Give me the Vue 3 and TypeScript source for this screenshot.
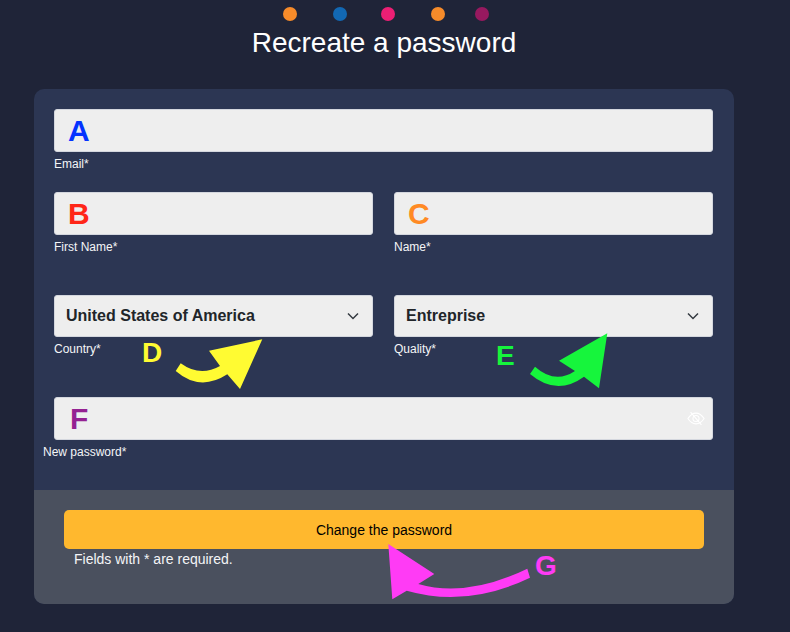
<script setup lang="ts">
const dots: { color: string; gap: number }[] = [
  { color: '#f68b2a', gap: 0 },
  { color: '#1268b3', gap: 36 },
  { color: '#ec1f74', gap: 34 },
  { color: '#f68b2a', gap: 36 },
  { color: '#97195f', gap: 30 },
]
</script>

<template>
  <div class="page">
    <div class="dots">
      <span
        v-for="(d, i) in dots"
        :key="i"
        class="dot"
        :style="{ background: d.color, marginLeft: d.gap + 'px' }"
      ></span>
    </div>
    <h1 class="title">Recreate a password</h1>

    <form class="card" @submit.prevent>
      <div class="body">
        <div class="field row-a">
          <div class="input"><span class="mark mark-a">A</span></div>
          <label class="label">Email*</label>
        </div>

        <div class="cols row-b">
          <div class="field">
            <div class="input"><span class="mark mark-b">B</span></div>
            <label class="label">First Name*</label>
          </div>
          <div class="field">
            <div class="input"><span class="mark mark-c">C</span></div>
            <label class="label">Name*</label>
          </div>
        </div>

        <div class="cols row-c">
          <div class="field">
            <div class="input select">
              <span>United States of America</span>
              <svg class="chevron" viewBox="0 0 12 8" width="12" height="8">
                <path d="M1 1.5 L6 6.5 L11 1.5" />
              </svg>
            </div>
            <label class="label">Country*</label>
          </div>
          <div class="field">
            <div class="input select">
              <span>Entreprise</span>
              <svg class="chevron" viewBox="0 0 12 8" width="12" height="8">
                <path d="M1 1.5 L6 6.5 L11 1.5" />
              </svg>
            </div>
            <label class="label">Quality*</label>
          </div>
        </div>

        <div class="field">
          <div class="input password">
            <span class="mark mark-f">F</span>
            <svg class="eye" viewBox="0 0 20 16" width="18" height="15">
              <path d="M1 8 C4 3.5 7 2 10 2 C13 2 16 3.5 19 8 C16 12.5 13 14 10 14 C7 14 4 12.5 1 8 Z" />
              <circle cx="10" cy="8" r="3.4" />
              <path d="M4 1 L16 15" />
            </svg>
          </div>
          <label class="label label-out">New password*</label>
        </div>
      </div>

      <div class="foot">
        <button class="submit" type="submit">Change the password</button>
        <p class="note">Fields with * are required.</p>
      </div>
    </form>

    <span class="note-letter letter-d">D</span>
    <span class="note-letter letter-e">E</span>
    <span class="note-letter letter-g">G</span>

    <svg class="arrows" viewBox="0 0 790 632" width="790" height="632">
      <path fill="#fffb32" d="M180.7 363.3 Q200 377.4 220 366 L209 350.7 L262.3 339.3 L240 389 L227.3 374.3 Q200 392 175.7 371 Z" />
      <path fill="#16f53c" d="M535 366.7 Q555 384.5 575 371 L559 360.7 L607.3 333.3 L599 388.3 L584 376.7 Q556.7 396.6 530 374 Z" />
      <path fill="#ff3bf5" d="M527.3 568.7 Q467 598 418.3 584 L434.3 574 L388.3 544 L392.3 599.3 L406.7 590.7 Q467 608 530 577.7 Z" />
    </svg>
  </div>
</template>

<style>
html,
body {
  margin: 0;
  background: #1f2438;
}
</style>

<style scoped>
.page {
  position: relative;
  box-sizing: border-box;
  width: 790px;
  height: 632px;
  overflow: hidden;
  padding: 7px 56px 0 34px;
  background: #1f2438;
  font-family: "Liberation Sans", Arial, sans-serif;
  color: #fff;
}
.dots {
  display: flex;
  height: 14px;
  padding-left: 249px;
}
.dot {
  flex: none;
  width: 14px;
  height: 14px;
  border-radius: 50%;
}
.title {
  margin: 5px 0 0;
  font-size: 28px;
  line-height: 34px;
  font-weight: 400;
  text-align: center;
}
.card {
  margin-top: 29px;
  width: 700px;
  height: 515px;
  display: flex;
  flex-direction: column;
  border-radius: 10px;
  overflow: hidden;
  background: #2c3653;
}
.body {
  box-sizing: border-box;
  height: 401px;
  padding: 20px 21px 0 20px;
}
.row-a {
  margin-bottom: 20px;
}
.row-b {
  margin-bottom: 40px;
}
.row-c {
  margin-bottom: 40px;
}
.cols {
  display: grid;
  grid-template-columns: 319px 319px;
  column-gap: 21px;
}
.row-c .input {
  height: 42px;
}
.input {
  box-sizing: border-box;
  height: 43px;
  display: flex;
  align-items: center;
  padding-left: 13px;
  background: #eeeeee;
  border: 1px solid #d4d7de;
  border-radius: 3px;
}
.select {
  justify-content: space-between;
  padding: 0 13px 0 11px;
  font-size: 16px;
  font-weight: 700;
  color: #212529;
}
.chevron {
  fill: none;
  stroke: #343a40;
  stroke-width: 1.5;
}
.password {
  justify-content: space-between;
  padding-right: 7px;
}
.eye {
  fill: none;
  stroke: #ffffff;
  stroke-width: 1.2;
}
.label {
  display: block;
  height: 20px;
  padding-top: 5px;
  box-sizing: border-box;
  font-size: 12px;
  line-height: 15px;
  color: #f4f5f7;
}
.label-out {
  margin-left: -11px;
}
.mark {
  font-size: 30px;
  line-height: 34px;
  font-weight: 700;
}
.mark-a {
  color: #0433ff;
}
.mark-b {
  color: #ff2618;
}
.mark-c {
  color: #ff8a24;
}
.mark-f {
  color: #942192;
  padding-left: 2px;
}
.foot {
  flex: 1;
  box-sizing: border-box;
  padding: 20px 30px 0;
  background: #4a505e;
}
.submit {
  display: block;
  width: 100%;
  height: 39px;
  padding: 0;
  border: 0;
  border-radius: 5px;
  background: #ffb82e;
  color: #000;
  font-family: inherit;
  font-size: 14px;
}
.note {
  margin: 0;
  padding: 1px 10px 0;
  font-size: 14px;
  line-height: 18px;
  color: #f4f5f7;
}
.note-letter {
  position: absolute;
  font-size: 28px;
  line-height: 32px;
  font-weight: 700;
}
.letter-d {
  left: 142px;
  top: 337px;
  color: #fffb32;
}
.letter-e {
  left: 496px;
  top: 340px;
  color: #16f53c;
}
.letter-g {
  left: 535px;
  top: 550px;
  color: #ff3bf5;
}
.arrows {
  position: absolute;
  left: 0;
  top: 0;
  pointer-events: none;
}
</style>
